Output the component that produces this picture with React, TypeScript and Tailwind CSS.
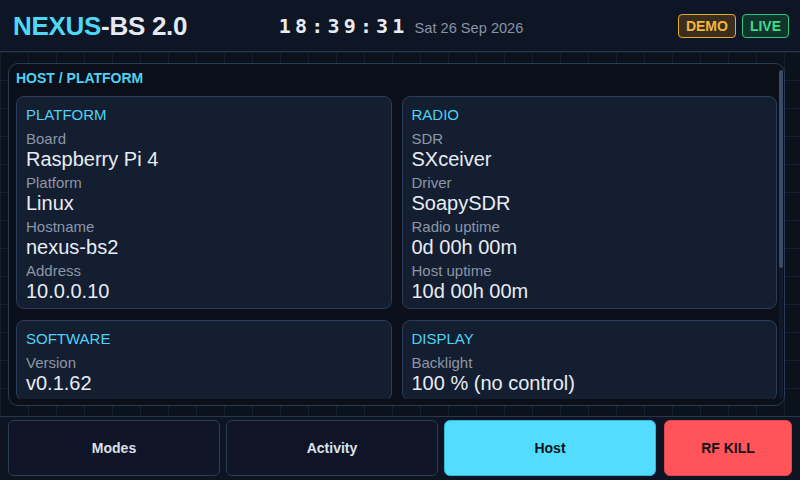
const sans = "font-['Liberation_Sans',Arial,sans-serif]";

type Row = { label: string; value: string };

const Card = ({ title, rows }: { title: string; rows: Row[] }) => {
  return (
    <div className="rounded-[8px] border border-[#2b3d58] bg-[#131e31] px-[9px] pt-[8px] pb-[3px]">
      <div className="mb-[4px] text-[15px] leading-[20px] text-[#4fd2f2]">{title}</div>
      {rows.map((r) => (
        <div key={r.label}>
          <div className="text-[15px] leading-[20px] text-[#8c96a7]">{r.label}</div>
          <div className="mb-[4px] text-[20px] leading-[20px] text-[#e8ecf3]">{r.value}</div>
        </div>
      ))}
    </div>
  );
};

const FooterButton = ({
  label,
  className,
}: {
  label: string;
  className: string;
}) => (
  <button
    className={`flex h-[56px] items-center justify-center rounded-[6px] border text-[14px] font-bold ${className}`}
  >
    {label}
  </button>
);

export default function App() {
  return (
    <div className={`flex h-[480px] w-[800px] flex-col overflow-hidden bg-[#0e1524] ${sans}`}>
      {/* header */}
      <header className="flex h-[52px] shrink-0 items-center border-b border-[#26364c] bg-[#0e1524] pr-[11px] pl-[13px]">
        <div className="flex-1 pt-[1px] text-[26px] leading-none font-bold tracking-[-0.3px]">
          <span className="text-[#4dd8f7]">NEXUS</span>
          <span className="text-[#e6e9f2]">-BS 2.0</span>
        </div>
        <div className="flex items-baseline gap-[6px]">
          <span className="font-['DejaVu_Sans_Mono',monospace] text-[20px] font-bold tracking-[4.2px] text-[#e8ebf2]">
            18:39:31
          </span>
          <span className="text-[14.6px] text-[#8a94a8]">Sat 26 Sep 2026</span>
        </div>
        <div className="flex flex-1 justify-end gap-[6px]">
          <span className="rounded-[4px] border border-[#e8a92a] bg-[#3a2f1e] px-[7px] text-[14px] leading-[22px] font-bold text-[#f5b53a]">
            DEMO
          </span>
          <span className="rounded-[4px] border border-[#2fc57f] bg-[#12352b] px-[7px] text-[14px] leading-[22px] font-bold text-[#3ddc8b]">
            LIVE
          </span>
        </div>
      </header>

      {/* main */}
      <main className="h-[364px] shrink-0 bg-[#0b121b] bg-[linear-gradient(to_right,#142030_1px,transparent_1px),linear-gradient(to_bottom,#142030_1px,transparent_1px)] bg-[size:28px_28px] pt-[11px] pl-[8px]">
        <section className="flex h-[343px] w-[777px] rounded-[10px] border border-[#2b3b52] bg-[#0a0f1a] py-[6px] pr-[1px] pl-[7px]">
          <div className="flex-1 overflow-hidden">
            <div className="text-[14px] leading-[16px] font-bold text-[#4fd2f2]">HOST / PLATFORM</div>
            <div className="mt-[10px] grid grid-cols-2 gap-x-[10px] gap-y-[11px]">
              <Card
                title="PLATFORM"
                rows={[
                  { label: 'Board', value: 'Raspberry Pi 4' },
                  { label: 'Platform', value: 'Linux' },
                  { label: 'Hostname', value: 'nexus-bs2' },
                  { label: 'Address', value: '10.0.0.10' },
                ]}
              />
              <Card
                title="RADIO"
                rows={[
                  { label: 'SDR', value: 'SXceiver' },
                  { label: 'Driver', value: 'SoapySDR' },
                  { label: 'Radio uptime', value: '0d 00h 00m' },
                  { label: 'Host uptime', value: '10d 00h 00m' },
                ]}
              />
              <Card title="SOFTWARE" rows={[{ label: 'Version', value: 'v0.1.62' }]} />
              <Card title="DISPLAY" rows={[{ label: 'Backlight', value: '100 % (no control)' }]} />
            </div>
          </div>
          <div className="ml-[2px] w-[4px] rounded-full bg-[#101a2a]">
            <div className="h-[198px] w-[4px] rounded-full bg-[#3a4b68]" />
          </div>
        </section>
      </main>

      {/* footer */}
      <footer className="flex flex-1 items-start border-t border-[#26364c] bg-[#0e1522] pt-[3px] pl-[8px]">
        <div className="flex gap-[6px]">
          <FooterButton label="Modes" className="w-[212px] border-[#2c3d56] bg-[#0f1526] text-[#dde1ea]" />
          <FooterButton label="Activity" className="w-[212px] border-[#2c3d56] bg-[#0f1526] text-[#dde1ea]" />
          <FooterButton label="Host" className="w-[212px] border-[#3ab4d4] bg-[#52dcfe] text-[#0c1420]" />
        </div>
        <FooterButton label="RF KILL" className="ml-[8px] w-[128px] border-[#d9464c] bg-[#ff5459] text-[#14121a]" />
      </footer>
    </div>
  );
}
